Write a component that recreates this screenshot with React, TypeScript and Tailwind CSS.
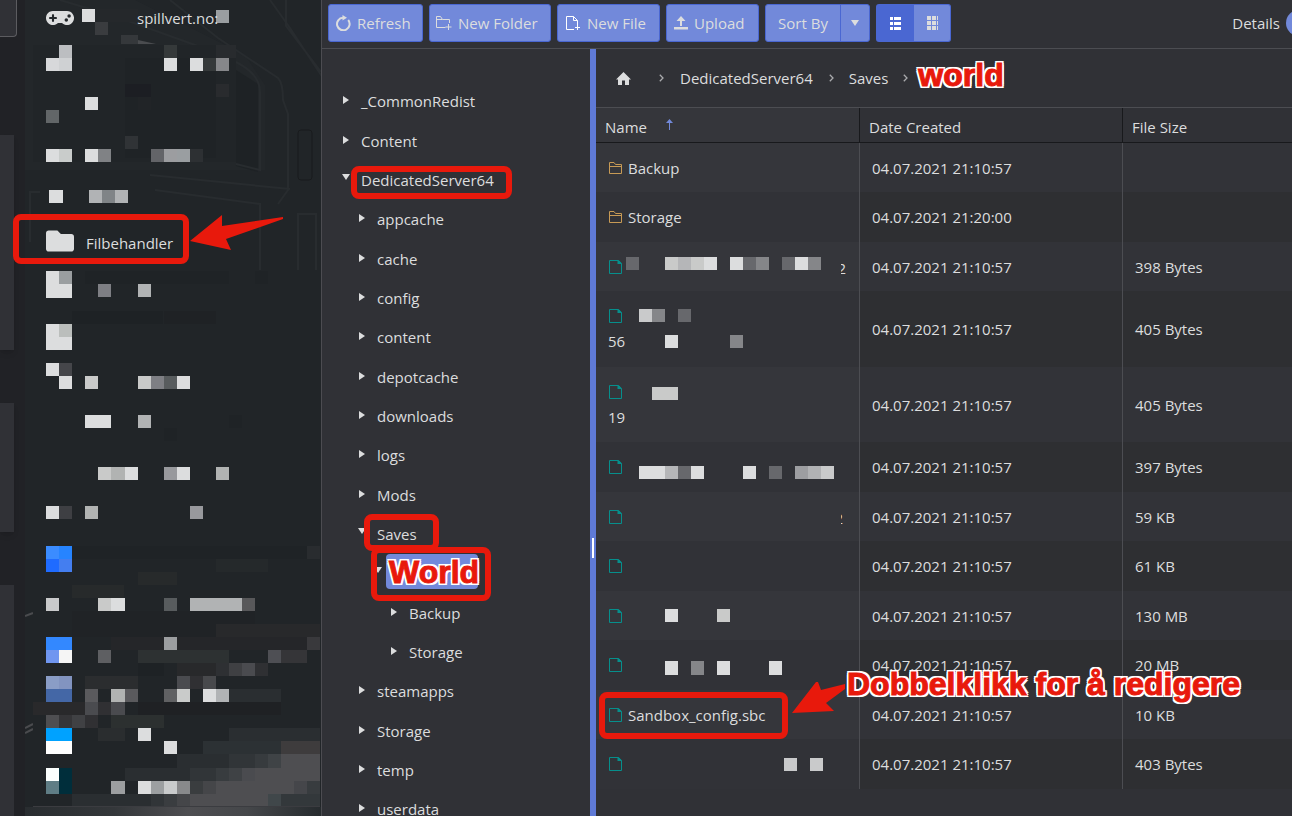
import type { ReactNode } from "react";
import { FaFolder, FaGamepad } from "react-icons/fa";

// x, y, width, height, fill
type Block = [number, number, number, number, string];

const sidebarBlocks: Block[] = [
  [95, 9, 43, 13, "#25282b"], [82, 9, 13, 13, "#dcddde"], [95, 22, 13, 13, "#3a3c3f"], [121, 35, 17, 9, "#35383b"], [216, 10, 13, 13, "#9a9ea1"],
  [33, 45, 203, 117, "#212528"], [125, 58, 91, 100, "#1f2326"], [125, 84, 26, 13, "#1c1e23"],
  [59, 45, 13, 13, "#bcbec1"], [164, 45, 13, 13, "#35393a"], [216, 45, 20, 13, "#282b2e"],
  [46, 58, 13, 13, "#d7d8da"], [59, 58, 13, 13, "#cfd1d3"], [164, 58, 13, 13, "#dcddde"], [190, 58, 13, 13, "#dcddde"], [203, 58, 13, 13, "#35393a"], [216, 58, 13, 13, "#86878a"],
  [216, 84, 13, 13, "#292b2e"], [138, 97, 13, 13, "#212427"], [85, 97, 13, 13, "#dcddde"], [46, 110, 13, 13, "#626668"], [125, 136, 13, 13, "#303336"],
  [46, 149, 13, 13, "#dcddde"], [59, 149, 13, 13, "#c9cccb"], [85, 149, 13, 13, "#dcddde"], [98, 149, 13, 13, "#808285"],
  [151, 149, 13, 13, "#636468"], [164, 149, 13, 13, "#9c9da0"], [177, 149, 13, 13, "#9a9ea1"], [190, 149, 13, 13, "#2d3033"],
  [49, 190, 14, 13, "#dcddde"], [89, 190, 13, 13, "#b1b3b5"], [102, 190, 13, 13, "#808487"], [115, 190, 13, 13, "#b1b3b5"],
  [33, 271, 287, 535, "#212528"], [85, 271, 144, 13, "#1f2326"], [72, 311, 91, 13, "#1e2225"], [164, 311, 52, 13, "#1f2225"], [255, 271, 13, 13, "#1f2326"],
  [46, 271, 13, 27, "#dcddde"], [59, 271, 13, 13, "#9a9ea0"], [59, 284, 13, 14, "#dcddde"], [98, 284, 13, 13, "#7e7f84"], [138, 284, 13, 13, "#b1b3b4"],
  [46, 324, 13, 26, "#dcddde"], [59, 324, 13, 13, "#bbbebc"], [59, 337, 13, 13, "#dcddde"],
  [46, 363, 13, 13, "#dcddde"], [59, 363, 13, 13, "#45464a"], [59, 376, 13, 13, "#dcddde"], [85, 376, 13, 13, "#c9cac9"],
  [138, 376, 13, 13, "#c9cac9"], [151, 376, 13, 13, "#7e7f84"], [164, 376, 13, 13, "#585c5e"], [177, 376, 13, 13, "#dcddde"],
  [85, 415, 26, 13, "#dcddde"], [138, 415, 13, 13, "#b1b3b4"], [164, 428, 13, 13, "#1f2326"], [229, 415, 13, 13, "#1f2326"],
  [98, 467, 13, 13, "#c9cac9"], [111, 467, 14, 13, "#b1b3b2"], [125, 467, 13, 13, "#dcddde"], [164, 467, 13, 13, "#98999d"], [177, 467, 13, 13, "#dcddde"], [216, 467, 13, 13, "#b1b3b2"],
  [46, 506, 13, 13, "#dcddde"], [59, 506, 13, 13, "#3e3f43"], [85, 506, 13, 13, "#b1b3b2"], [190, 506, 13, 13, "#98999d"],
  [46, 546, 13, 13, "#3b8cff"], [59, 546, 13, 13, "#2684ff"], [46, 559, 13, 13, "#1f6bff"], [59, 559, 13, 13, "#447ef0"],
  [72, 546, 235, 13, "#1f2326"], [307, 546, 13, 13, "#292c2f"], [216, 559, 52, 13, "#25292b"], [138, 572, 39, 13, "#272a2b"], [72, 585, 52, 13, "#272a2b"],
  [46, 598, 13, 13, "#c9cacb"], [98, 598, 13, 13, "#c9cac9"], [111, 598, 14, 13, "#dcddde"], [164, 598, 13, 13, "#585c5e"], [190, 598, 52, 13, "#b1b3b4"], [242, 598, 13, 13, "#58585a"],
  [72, 611, 183, 26, "#202326"], [216, 624, 104, 13, "#28292b"], [111, 637, 196, 13, "#252629"], [307, 637, 13, 13, "#39393c"],
  [46, 637, 26, 13, "#3388ff"], [164, 637, 13, 13, "#9c9ea0"],
  [138, 650, 91, 13, "#2d3132"], [46, 650, 13, 13, "#7096f0"], [59, 650, 13, 13, "#f5f5f5"], [98, 650, 13, 13, "#5e5f62"], [268, 650, 13, 13, "#4e4f54"], [281, 650, 26, 13, "#353538"],
  [138, 663, 26, 13, "#1e2225"], [177, 663, 39, 13, "#28292b"], [216, 663, 13, 13, "#2e3033"], [229, 663, 13, 13, "#3f4043"], [242, 663, 13, 13, "#4a4b4f"], [255, 663, 13, 13, "#2f3033"],
  [85, 676, 53, 13, "#2b2d2f"], [46, 676, 13, 13, "#8a9dc6"], [59, 676, 13, 13, "#8294c0"], [177, 676, 13, 13, "#4a4b4f"], [190, 676, 13, 13, "#303033"], [203, 676, 13, 13, "#48494c"],
  [229, 689, 52, 13, "#2a2e31"], [46, 689, 26, 13, "#4467a6"], [85, 689, 13, 13, "#5a5a5d"], [111, 689, 14, 13, "#b1b3b2"], [125, 689, 13, 13, "#5a5a5d"],
  [164, 689, 13, 13, "#606163"], [177, 689, 13, 13, "#c9cbca"], [203, 689, 13, 13, "#dcddde"], [216, 689, 13, 13, "#b1b3b5"],
  [33, 702, 52, 13, "#29292b"], [138, 702, 143, 13, "#1f2124"], [85, 702, 13, 13, "#4a4b4f"], [98, 702, 13, 13, "#303033"], [111, 702, 14, 13, "#4a4b4f"],
  [111, 715, 53, 13, "#2c3030"], [46, 715, 13, 13, "#4e4e51"], [59, 715, 13, 13, "#353538"], [72, 715, 13, 13, "#404144"], [85, 715, 13, 13, "#303033"],
  [46, 728, 26, 13, "#00a2ff"], [98, 728, 27, 13, "#2a2d2f"], [138, 728, 13, 13, "#dcddde"], [229, 728, 91, 13, "#2a2e31"],
  [46, 741, 26, 13, "#ffffff"], [164, 741, 13, 13, "#dcddde"], [203, 741, 78, 13, "#2c3134"], [281, 741, 39, 13, "#3e3c3d"],
  [177, 754, 52, 14, "#2a2e31"], [229, 754, 26, 14, "#313538"], [255, 754, 13, 14, "#373b3e"], [268, 754, 13, 14, "#3f4346"], [281, 754, 39, 14, "#4e4e51"],
  [46, 768, 13, 13, "#fbfffe"], [59, 768, 13, 26, "#002e3b"], [125, 768, 65, 13, "#2a2e31"], [190, 768, 26, 13, "#313538"], [216, 768, 13, 13, "#383c3f"],
  [229, 768, 13, 13, "#3f4245"], [242, 768, 13, 13, "#4a4b4f"], [255, 768, 65, 13, "#4e4e51"],
  [46, 781, 13, 13, "#5f7d85"], [111, 781, 14, 13, "#9c9ea0"], [138, 781, 13, 13, "#dcddde"], [151, 781, 13, 13, "#9c9fa1"], [164, 781, 13, 13, "#c9cbcc"], [177, 781, 13, 13, "#88898b"],
  [190, 781, 13, 13, "#3a3d3f"], [203, 781, 13, 13, "#454649"], [216, 781, 78, 13, "#4e4e51"], [294, 781, 13, 13, "#45464a"], [307, 781, 13, 13, "#383c3f"],
  [72, 794, 79, 12, "#2a2e31"], [151, 794, 13, 12, "#313538"], [164, 794, 13, 12, "#3a3d40"], [177, 794, 13, 12, "#454649"], [190, 794, 78, 12, "#4e4e51"],
  [268, 794, 13, 12, "#40474a"], [281, 794, 39, 12, "#33383b"],
];

const treeRows = [
  { name: "_CommonRedist", depth: 0 },
  { name: "Content", depth: 0 },
  { name: "DedicatedServer64", depth: 0, open: true, frame: "-left-[10px] top-[5px] w-[161px] h-[33px]" },
  { name: "appcache", depth: 1 },
  { name: "cache", depth: 1 },
  { name: "config", depth: 1 },
  { name: "content", depth: 1 },
  { name: "depotcache", depth: 1 },
  { name: "downloads", depth: 1 },
  { name: "logs", depth: 1 },
  { name: "Mods", depth: 1 },
  { name: "Saves", depth: 1, open: true, frame: "-left-[13px] top-[-1px] w-[75px] h-[37px]" },
  { name: "World", depth: 2, open: true, selected: true },
  { name: "Backup", depth: 3 },
  { name: "Storage", depth: 3 },
  { name: "steamapps", depth: 1 },
  { name: "Storage", depth: 1 },
  { name: "temp", depth: 1 },
  { name: "userdata", depth: 1 },
];

const indents = ["pl-[20px]", "pl-[36px]", "pl-[52px]", "pl-[68px]"];

type FileRow = {
  name?: string;
  folder?: boolean;
  second?: string;
  tail?: string;
  date: string;
  size: string;
  height: string;
  blocks?: Block[];
  marked?: boolean;
};

const files: FileRow[] = [
  { name: "Backup", folder: true, date: "04.07.2021 21:10:57", size: "", height: "h-[49px]" },
  { name: "Storage", folder: true, date: "04.07.2021 21:20:00", size: "", height: "h-[50px]" },
  {
    date: "04.07.2021 21:10:57", size: "398 Bytes", height: "h-[49px]", tail: "w-[5px]",
    blocks: [
      [30, 15, 13, 13, "#67686c"], [69, 15, 13, 13, "#c9cac9"], [82, 15, 13, 13, "#b5b6b8"], [95, 15, 13, 13, "#c9cac9"], [108, 15, 13, 13, "#dcddde"],
      [134, 15, 13, 13, "#dcddde"], [147, 15, 13, 13, "#67686c"], [160, 15, 13, 13, "#858689"], [186, 15, 13, 13, "#67686c"], [199, 15, 13, 13, "#dcddde"], [212, 15, 13, 13, "#858689"],
    ],
  },
  {
    second: "56", date: "04.07.2021 21:10:57", size: "405 Bytes", height: "h-[76px]",
    blocks: [[43, 18, 13, 13, "#c9cacb"], [56, 18, 13, 13, "#858689"], [82, 18, 13, 13, "#67686c"], [69, 44, 13, 13, "#dcddde"], [134, 44, 13, 13, "#858689"]],
  },
  { second: "19", date: "04.07.2021 21:10:57", size: "405 Bytes", height: "h-[75px]", blocks: [[56, 20, 26, 13, "#c9cac9"]] },
  {
    date: "04.07.2021 21:10:57", size: "397 Bytes", height: "h-[50px]",
    blocks: [
      [43, 24, 26, 13, "#dcddde"], [69, 24, 13, 13, "#b5b6b8"], [82, 24, 13, 13, "#67686c"], [95, 24, 13, 13, "#dcddde"], [147, 24, 13, 13, "#dcddde"],
      [173, 24, 13, 13, "#67686c"], [199, 24, 13, 13, "#9d9ea1"], [212, 24, 13, 13, "#b1b2b4"], [225, 24, 13, 13, "#c9cacb"],
    ],
  },
  { date: "04.07.2021 21:10:57", size: "59 KB", height: "h-[49px]", tail: "w-[2px]" },
  { date: "04.07.2021 21:10:57", size: "61 KB", height: "h-[50px]" },
  { date: "04.07.2021 21:10:57", size: "130 MB", height: "h-[49px]", blocks: [[69, 18, 13, 13, "#dcddde"], [121, 18, 13, 13, "#c9cac9"]] },
  {
    date: "04.07.2021 21:10:57", size: "20 MB", height: "h-[50px]",
    blocks: [[69, 21, 13, 14, "#dcddde"], [95, 21, 13, 14, "#858689"], [121, 21, 13, 14, "#dcddde"], [173, 21, 13, 14, "#dcddde"]],
  },
  { name: "Sandbox_config.sbc", date: "04.07.2021 21:10:57", size: "10 KB", height: "h-[49px]", marked: true },
  { date: "04.07.2021 21:10:57", size: "403 Bytes", height: "h-[50px]", blocks: [[188, 19, 13, 13, "#c9cacb"], [214, 19, 13, 13, "#c9cacb"]] },
];

function Blocks({ blocks }: { blocks: Block[] }) {
  return (
    <g shapeRendering="crispEdges">
      {blocks.map(([x, y, w, h, fill], i) => (
        <rect key={i} x={x} y={y} width={w} height={h} fill={fill} />
      ))}
    </g>
  );
}

function Frame({ className }: { className: string }) {
  return <span className={`pointer-events-none absolute z-10 rounded-lg border-6 border-[#e8190c] ${className}`} />;
}

function Callout({ children, className }: { children: ReactNode; className: string }) {
  return (
    <span
      className={`pointer-events-none absolute z-20 whitespace-nowrap font-['Liberation_Sans',sans-serif] text-[32px] leading-9 font-bold text-[#e8190c] [-webkit-text-stroke:1px_#e8190c] [text-shadow:2px_0_white,-2px_0_white,0_2px_white,0_-2px_white,2px_2px_white,-2px_2px_white,2px_-2px_white,-2px_-2px_white,0_0_3px_white] ${className}`}
    >
      {children}
    </span>
  );
}

function FolderIcon() {
  return (
    <svg className="h-3 w-[13px] shrink-0" viewBox="0 0 13 12" fill="none" stroke="#c79a55">
      <path d="M.5 11.500V.5h4.500l1.500 2h6v9zM.5 4.500h12" />
    </svg>
  );
}

function FileIcon() {
  return (
    <svg className="h-[14px] w-[13px] shrink-0" viewBox="0 0 13 14" fill="none" stroke="#068f8c">
      <path d="M.5 .5h9l3 3v10H.5z" />
      <path d="M8.500 .5v3.500h4V3L10 .5z" fill="#068f8c" stroke="none" />
    </svg>
  );
}

function Chevron() {
  return (
    <svg className="h-2 w-[5px] shrink-0" viewBox="0 0 5 8" fill="none" stroke="#a9aaad" strokeWidth="1.300">
      <path d="M.8 .7 4 4 .8 7.300" />
    </svg>
  );
}

function Sidebar() {
  return (
    <nav className="relative w-[297px] shrink-0 border-r border-[#4c4c51] bg-[#212528] text-[#dcddde]">
      <svg className="absolute top-0 left-0 h-[816px] w-[296px]" viewBox="25 0 296 816" fill="none">
        <defs>
          <linearGradient id="floor" x1="25" x2="321" y1="0" y2="0" gradientUnits="userSpaceOnUse">
            <stop offset="0" stopColor="#292d30" />
            <stop offset=".3" stopColor="#34373a" />
            <stop offset=".55" stopColor="#4e4e51" />
            <stop offset=".75" stopColor="#45474a" />
            <stop offset="1" stopColor="#262b2e" />
          </linearGradient>
        </defs>
        <path d="M25 30V0h110l110 55 20 30v85H25z" fill="#23272a" />
        <path d="M236 70l22 14v88l-22-6z" fill="#1e2225" />
        <path d="M138 40l18 4h-18z" fill="#4a4c4f" />
        <g stroke="#282c2f" strokeWidth="2">
          <path d="M60 0l60 18 100 36M170 0l48 38 60 40q5 5 5 22l5 14v76l-10 14M270 0l20 28 33 50M286 0v26l35 46" />
          <path d="M30 242v-50h10M150 175l140 14M155 190l105 14v66M298 270v-56h18v56" />
          <path d="M236 62q24 12 24 30v78l-24-6" />
        </g>
        <rect x="298" y="130" width="14" height="50" rx="3" stroke="#191b1d" />
        <path d="M25 733l8-4M25 728l8-4M25 616l8-3" stroke="#4a4b4e" strokeWidth="2" />
        <path d="M25 807h296v9H25z" fill="url(#floor)" />
        <Blocks blocks={sidebarBlocks} />
        <path d="M33 806.500h287" stroke="#3b3c40" />
      </svg>
      <div className="relative flex items-center pt-1 pl-[21px]">
        <FaGamepad className="h-7 w-7" />
        <span className="pl-[63px] text-[15px] leading-7">spillvert.no:</span>
      </div>
      <a href="#filbehandler" className="relative mt-[194px] ml-[21px] flex w-fit items-center gap-3 text-[15px] leading-[30px]">
        <FaFolder className="h-7 w-7" />
        <span className="pt-1 leading-[26px]">Filbehandler</span>
        <Frame className="-left-[33px] -top-[12px] h-[50px] w-[176px]" />
        <svg className="absolute -top-[11px] left-[144px] h-[36px] w-[94px]" viewBox="0 0 94 36" fill="#e8190c">
          <path d="M0 26 32 0v11L93 2v2L36 24l5 11z" />
        </svg>
      </a>
    </nav>
  );
}

const tool =
  "flex h-[38px] shrink-0 items-center rounded-[3px] border border-[#4a67d2] bg-[#7289da] text-[#dcddde]";

function Toolbar() {
  return (
    <header className="flex h-[49px] shrink-0 items-start gap-1.5 overflow-hidden border-b border-[#4c4d52] pt-1 pl-1.5">
      <button className={`${tool} w-[95px] gap-1.5 pl-1.5`}>
        <svg className="h-4 w-4" viewBox="0 0 16 16" fill="none" stroke="currentColor" strokeWidth="2">
          <path d="M13.200 5A6.300 6.300 0 1 1 8 2.700" />
          <path d="M7.500 0l4.500 2.700-4.500 2.800z" fill="currentColor" stroke="none" />
        </svg>
        Refresh
      </button>
      <button className={`${tool} w-[122px] gap-1.5 pl-1.5`}>
        <svg className="h-4 w-4" viewBox="0 0 16 16" fill="none" stroke="currentColor">
          <path d="M13.500 8V4.500H6.500l-2-3H.5v11h9M.5 4.500h6M12.500 9v6M9.500 12h6" />
        </svg>
        New Folder
      </button>
      <button className={`${tool} w-[103px] gap-1.5 pl-[7px]`}>
        <svg className="h-4 w-4" viewBox="0 0 16 16" fill="none" stroke="white">
          <path d="M9 14.500H1.500V1.500h7l4 4V10M8.500 1.500v4h4M12.500 10v5M10 12.500h5" />
        </svg>
        New File
      </button>
      <button className={`${tool} w-[93px] gap-[5px] pl-1.5`}>
        <svg className="h-4 w-4" viewBox="0 0 16 16" fill="currentColor">
          <path d="M8 1l4.500 5H9v5H7V6H3.500zM1 12h14v2.500H1z" />
        </svg>
        Upload
      </button>
      <div className="flex shrink-0">
        <button className={`${tool} w-[76px] justify-center rounded-r-none`}>Sort By</button>
        <button aria-label="Sort options" className={`${tool} -ml-px w-[30px] justify-center rounded-l-none`}>
          <svg className="h-1.5 w-2" viewBox="0 0 8 6" fill="currentColor">
            <path d="M0 0h8L4 6z" />
          </svg>
        </button>
      </div>
      <div className="flex shrink-0">
        <button aria-label="List view" className="flex h-[38px] w-[38px] items-center justify-center rounded-l-[3px] bg-[#4a67d2]">
          <svg className="h-[13px] w-[11px]" viewBox="0 0 11 13" fill="white">
            <path d="M0 0h3v3H0zM4 0h7v3H4zM0 5h3v3H0zM4 5h7v3H4zM0 10h3v3H0zM4 10h7v3H4z" />
          </svg>
        </button>
        <button aria-label="Grid view" className={`${tool} w-[37px] justify-center rounded-l-none border-l-0`}>
          <svg className="h-[14px] w-[11px]" viewBox="0 0 11 14" fill="currentColor">
            <path d="M0 0h4v4H0zM5 0h4v4H5zM10 0h1v4h-1zM0 5h4v4H0zM5 5h4v4H5zM10 5h1v4h-1zM0 10h4v4H0zM5 10h4v4H5zM10 10h1v4h-1z" />
          </svg>
        </button>
      </div>
      <label className="-mr-[34px] ml-auto flex h-[38px] items-center gap-1.5">
        Details
        <input type="checkbox" defaultChecked className="h-[26px] w-10 appearance-none rounded-full bg-[#7289da]" />
      </label>
    </header>
  );
}

function Tree() {
  return (
    <ul className="w-[268px] shrink-0 overflow-hidden pt-[33px]">
      {treeRows.map((row, i) => (
        <li key={i} className={`flex h-[39px] items-start nth-[3n+1]:h-10 ${indents[row.depth]}`}>
          <svg className={row.open ? "mt-[12px] h-2 w-2 shrink-0" : "mt-[14px] h-2 w-2 shrink-0"} viewBox="0 0 8 8" fill="#dcddde">
            <path d={row.open ? "M0 1h8L4 7z" : "M1 0l6 4-6 4z"} />
          </svg>
          {row.selected ? (
            <button className="relative ml-1 h-[35px] w-[92px] rounded bg-[#7289da]">
              <Frame className="-top-[7px] -left-[15px] h-[54px] w-[120px]" />
              <Callout className="top-0 left-[3px]">{row.name}</Callout>
            </button>
          ) : (
            <span className="relative ml-[11px] pt-[9px] leading-5">
              {row.name}
              {row.frame && <Frame className={row.frame} />}
            </span>
          )}
        </li>
      ))}
    </ul>
  );
}

function Breadcrumbs() {
  return (
    <div className="flex h-[59px] shrink-0 items-center border-b border-[#4c4d52] pl-5">
      <a href="#home" aria-label="Home" className="mr-7">
        <svg className="h-[15px] w-[15px]" viewBox="0 0 15 15" fill="#dcddde">
          <path d="M7.500 1 0 8.500h2V14h4V9.500h3V14h4V8.500h2z" />
        </svg>
      </a>
      <Chevron />
      <a href="#server" className="mx-4">DedicatedServer64</a>
      <Chevron />
      <a href="#saves" className="mx-[15px]">Saves</a>
      <Chevron />
      <span className="relative ml-[10px] h-9">
        <Callout className="-top-[3px] left-0">world</Callout>
      </span>
    </div>
  );
}

function FileTable() {
  return (
    <table className="w-full table-fixed border-separate border-spacing-0 text-left">
      <thead>
        <tr className="h-[35px]">
          <th className="w-[264px] border-r border-b border-[#18191c] bg-[#35363b] pt-1 pl-[9px] font-normal">
            <span className="flex items-center gap-[19px]">
              Name
              <svg className="mb-1.5 h-[11px] w-[7px]" viewBox="0 0 7 11" fill="none" stroke="#7289da">
                <path d="M3.500 11V1" />
                <path d="M0 4l3.500-4L7 4z" fill="#7289da" stroke="none" />
              </svg>
            </span>
          </th>
          <th className="w-[263px] border-r border-b border-[#18191c] pt-1 pl-[9px] font-normal">Date Created</th>
          <th className="border-b border-[#18191c] pt-1 pl-[9px] font-normal">File Size</th>
        </tr>
      </thead>
      <tbody>
        {files.map((file, i) => (
          <tr key={i} className={`group odd:bg-[#323338] even:bg-[#2e2f32] ${file.height}`}>
            <td className="relative border-r border-[#4c4d52] p-0 pl-[13px] group-odd:bg-[#35363b] group-even:bg-[#313237]">
              <div className="flex h-6 items-center gap-1.5">
                {file.folder ? <FolderIcon /> : <FileIcon />}
                {file.name}
              </div>
              {file.second && <div className="-ml-px leading-[26px]">{file.second}</div>}
              {file.tail && (
                <span className={`absolute top-[14px] left-[245px] flex h-6 justify-end overflow-hidden leading-6 ${file.tail}`}>2</span>
              )}
              {file.blocks && (
                <svg className="absolute top-0 left-0 h-full w-[263px]">
                  <Blocks blocks={file.blocks} />
                </svg>
              )}
              {file.marked && (
                <>
                  <Frame className="top-[2px] left-[3px] h-[47px] w-[189px]" />
                  <svg className="absolute -top-[8px] left-[196px] z-10 h-[31px] w-[53px]" viewBox="0 0 53 31" fill="#e8190c">
                    <path d="M0 31 24 0h2l3 8 24-6v5L34 21l8 8z" />
                  </svg>
                  <Callout className="-top-[24px] left-[251px]">Dobbelklikk for å redigere</Callout>
                </>
              )}
            </td>
            <td className="border-r border-[#4c4d52] p-0 pl-3">{file.date}</td>
            <td className="p-0 pl-3">{file.size}</td>
          </tr>
        ))}
      </tbody>
    </table>
  );
}

export default function App() {
  return (
    <div className="flex h-screen overflow-hidden bg-[#212226] font-['Open_Sans','Noto_Sans',sans-serif] text-[15px] leading-5 text-[#dcddde]">
      <div className="flex w-[25px] shrink-0 flex-col">
        <div className="h-[37px] w-[17px] shrink-0 rounded-br border-r border-b border-[#5c5c60] bg-[#303136]" />
        <div className="mt-[98px] h-[215px] w-[14px] shrink-0 bg-[#303136] shadow-md" />
        <div className="mt-[53px] h-[129px] w-[14px] shrink-0 bg-[#303136] shadow-md" />
        <div className="mt-[53px] w-[14px] flex-1 bg-[#303136]" />
      </div>
      <Sidebar />
      <div className="flex min-w-0 flex-1 flex-col bg-[#303136]">
        <Toolbar />
        <div className="flex min-h-0 flex-1">
          <Tree />
          <div className="flex w-1.5 shrink-0 items-center justify-center bg-[#5f7ad6] pt-[230px]">
            <div className="h-5 w-0.5 bg-white" />
          </div>
          <main className="min-w-0 flex-1 overflow-hidden">
            <Breadcrumbs />
            <FileTable />
          </main>
        </div>
      </div>
    </div>
  );
}
